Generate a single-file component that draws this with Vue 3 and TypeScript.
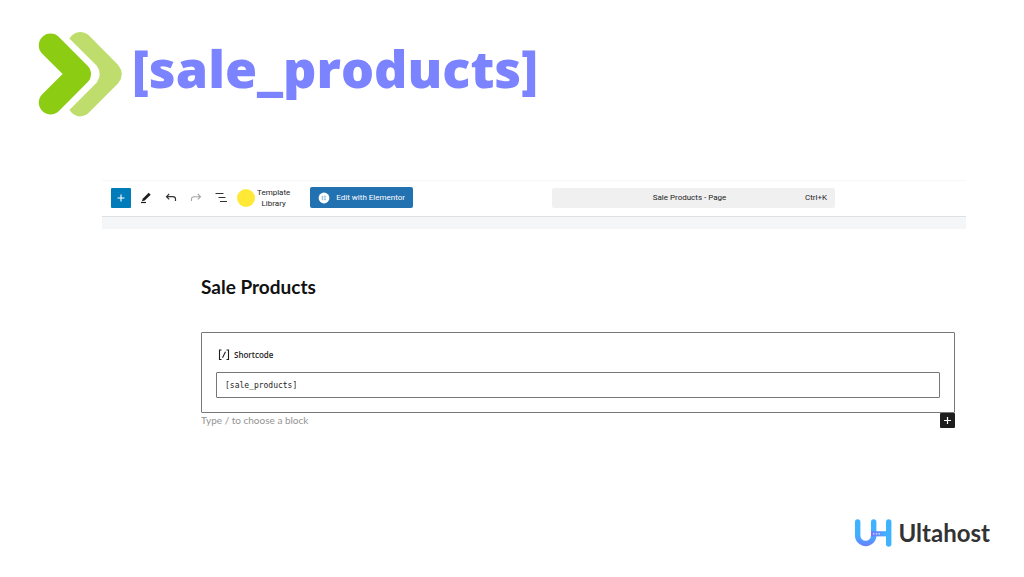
<script setup lang="ts">
import { ref } from 'vue'

const shortcode = ref('[sale_products]')
const nextBlock = ref('')
</script>

<template>
  <main class="slide">
    <header class="heading">
      <svg class="chevrons" viewBox="38 30 86 88" aria-hidden="true">
        <path d="M50.6 45.4 79.2 74 50.6 102.6" fill="none" stroke="#8ccd14" stroke-width="23.6" stroke-linecap="round" stroke-linejoin="round" />
        <path d="M69.4 38.4Q74 32 80 32 85.400 32 89 35.600L118.200 65Q125.400 74 118.200 83.200L89 112.600Q85.400 116.400 80 116.400 74 116.400 69.400 110L96.800 82.600Q102.600 74 96.800 65.800Z" fill="#bfdd6c" />
      </svg>
      <h1>[sale_products]</h1>
    </header>

    <section class="editor">
      <div class="toolbar">
        <div class="tools">
          <button class="add" type="button" aria-label="Add block">
            <svg viewBox="0 0 20 20"><path d="M10 6.500v7M6.500 10h7" stroke="#fff" stroke-width="1.100" /></svg>
          </button>
          <button class="tool" type="button" aria-label="Edit">
            <svg viewBox="0 0 14 14"><path d="m3.700 7.800 6-6 2 1.900-6 5.800-2.800.8z" fill="#1e1e1e" /><path d="M2 11.500h5" stroke="#1e1e1e" stroke-width="1.200" /></svg>
          </button>
          <button class="tool" type="button" aria-label="Undo">
            <svg viewBox="0 0 14 14"><path d="M5.200 3 2.500 5.700l2.700 2.700M2.800 5.700h6q2.700 0 2.700 2.400V10" fill="none" stroke="#333" stroke-width="1.200" /></svg>
          </button>
          <button class="tool" type="button" aria-label="Redo">
            <svg viewBox="0 0 14 14"><path d="m8.800 3 2.700 2.700-2.700 2.700M11.200 5.700h-6q-2.700 0-2.700 2.400V10" fill="none" stroke="#a5a5a5" stroke-width="1.100" /></svg>
          </button>
          <button class="tool" type="button" aria-label="Document overview">
            <svg viewBox="0 0 14 14"><path d="M1.500 2.500h8M4.500 6.500h7M6 10.500h7" stroke="#333" stroke-width="1.200" /></svg>
          </button>
          <button class="library" type="button"><span class="dot"></span><span>Template<br />Library</span></button>
          <button class="elementor" type="button">
            <svg viewBox="0 0 12 12" aria-hidden="true"><circle cx="6" cy="6" r="5.400" fill="#fff" /><path d="M4.300 3.800v4.400M5.700 4.300h2.200M5.700 6h2.200M5.700 7.700h2.200" stroke="#6fa3d0" stroke-width=".8" /></svg>
            Edit with Elementor
          </button>
        </div>
        <button class="command" type="button"><span>Sale Products - Page</span><kbd>Ctrl+K</kbd></button>
      </div>
      <div class="strip"></div>

      <div class="canvas">
        <h2>Sale Products</h2>
        <div class="block">
          <label for="shortcode">
            <svg viewBox="0 0 12 12" aria-hidden="true"><path d="M3.500 1h-2v9.500h2M8.500 1h2v9.500h-2M7.500 2.700 4.500 8.800" fill="none" stroke="#1e1e1e" stroke-width="1.100" /></svg>
            Shortcode
          </label>
          <input id="shortcode" v-model="shortcode" type="text" />
        </div>
        <div class="next">
          <input v-model="nextBlock" type="text" placeholder="Type / to choose a block" aria-label="New block" />
          <button type="button" aria-label="Add block">
            <svg viewBox="0 0 15 15"><path d="M7.500 4v7M4 7.500h7" stroke="#fff" stroke-width="1.200" /></svg>
          </button>
        </div>
      </div>
    </section>

    <footer class="brand">
      <svg viewBox="0 0 38 30" aria-hidden="true">
        <defs>
          <linearGradient id="u" x1="0" y1="0" x2="0" y2="30" gradientUnits="userSpaceOnUse">
            <stop offset=".55" stop-color="#3fb2ff" /><stop offset="1" stop-color="#7377ff" />
          </linearGradient>
          <linearGradient id="bar" x1="17" y1="0" x2="32" y2="0" gradientUnits="userSpaceOnUse">
            <stop offset="0" stop-color="#7a70ff" /><stop offset="1" stop-color="#3fb2ff" />
          </linearGradient>
        </defs>
        <path d="M3.700 4v13.500a8 8 0 0 0 16 0V4" fill="none" stroke="url(#u)" stroke-width="5.400" stroke-linecap="round" />
        <path d="M34.700 4v22" stroke="#3fb2ff" stroke-width="5.400" stroke-linecap="round" />
        <path d="M17 15.800h17" stroke="url(#bar)" stroke-width="5.200" />
        <path d="M19 15.800h1.400m1.400 0h1.400m1.400 0h1.400" stroke="#e4e8ff" stroke-width="1.300" />
      </svg>
      <span>Ultahost</span>
    </footer>
  </main>
</template>

<style>
body {
  margin: 0;
  background: #fff;
}
</style>

<style scoped>
.slide {
  box-sizing: border-box;
  display: flex;
  flex-direction: column;
  min-height: 100vh;
  padding: 30px 34px 28px 38px;
  font-family: Roboto, "Noto Sans", sans-serif;
  color: #1e1e1e;
}

button,
input {
  margin: 0;
  padding: 0;
  border: 0;
  background: none;
  font: inherit;
  color: inherit;
}

svg {
  display: block;
  flex: none;
}

.heading {
  display: flex;
  align-items: flex-start;
  gap: 8px;
}

.chevrons {
  width: 86px;
  height: 88px;
}

h1 {
  margin: 0;
  font: 800 52px/76px "Open Sans", sans-serif;
  color: #7b83ff;
}

.editor {
  margin: 62px 24px 0 64px;
}

.toolbar {
  display: flex;
  align-items: center;
  height: 33px;
  padding-bottom: 2px;
  border-top: 1px solid #f7f7f7;
  border-bottom: 1px solid #dfe0e1;
  font-size: 8px;
  line-height: 11px;
}

.tools {
  display: flex;
  align-items: center;
  flex: none;
  width: 450px;
}

.add {
  width: 20px;
  height: 20px;
  margin: 0 8px 0 9px;
  border-radius: 1px;
  background: #007cba;
}

.tool {
  width: 14px;
  margin-right: 11px;
}

.tool:nth-of-type(5) {
  margin-right: 9px;
}

.tool svg {
  width: 14px;
  height: 14px;
}

.library {
  display: flex;
  align-items: center;
  gap: 2px;
  margin-right: 20px;
}

.dot {
  width: 18px;
  height: 18px;
  border-radius: 50%;
  background: #ffe936;
}

.elementor {
  display: flex;
  align-items: center;
  gap: 6px;
  height: 21px;
  padding: 0 8px;
  border-radius: 2px;
  background: #2271b1;
  color: #fff;
  white-space: nowrap;
}

.elementor svg {
  width: 12px;
  height: 12px;
}

.command {
  display: grid;
  grid-template-columns: 1fr auto 1fr;
  align-items: center;
  flex: 1;
  max-width: 283px;
  height: 20px;
  padding: 0 8px 0 0;
  border-radius: 2px;
  background: #f0f0f0;
}

.command span {
  grid-column: 2;
}

kbd {
  justify-self: end;
  font: inherit;
}

.strip {
  height: 12px;
  background: #f5f6f7;
}

.canvas {
  margin: 44px 11px 0 99px;
}

h2 {
  margin: 0 0 31px;
  font: 700 19px/28px Lato, sans-serif;
  color: #111;
}

.block {
  padding: 14px;
  border: 1px solid #777;
  border-radius: 1px;
}

label {
  display: flex;
  align-items: center;
  gap: 4px;
  margin: 0 0 9px 2px;
  font: 600 8px/16px "Open Sans", sans-serif;
}

label svg {
  width: 12px;
  height: 12px;
}

.block input {
  display: block;
  box-sizing: border-box;
  width: 100%;
  height: 26px;
  padding: 0 8px;
  border: 1px solid #777;
  border-radius: 1px;
  font: 8px "DejaVu Sans Mono", monospace;
}

.next {
  display: flex;
  align-items: flex-start;
  justify-content: space-between;
}

.next input {
  flex: 1;
  height: 14px;
  font: 10px/14px Lato, sans-serif;
}

.next input::placeholder {
  color: #949494;
  opacity: 1;
}

.next button {
  width: 15px;
  height: 15px;
  border-radius: 1px;
  background: #1e1e1e;
}

.brand {
  display: flex;
  align-items: center;
  align-self: flex-end;
  gap: 7px;
  margin-top: auto;
  font: 700 24px/32px Lato, sans-serif;
  color: #333;
}

.brand svg {
  width: 38px;
  height: 30px;
}
</style>
